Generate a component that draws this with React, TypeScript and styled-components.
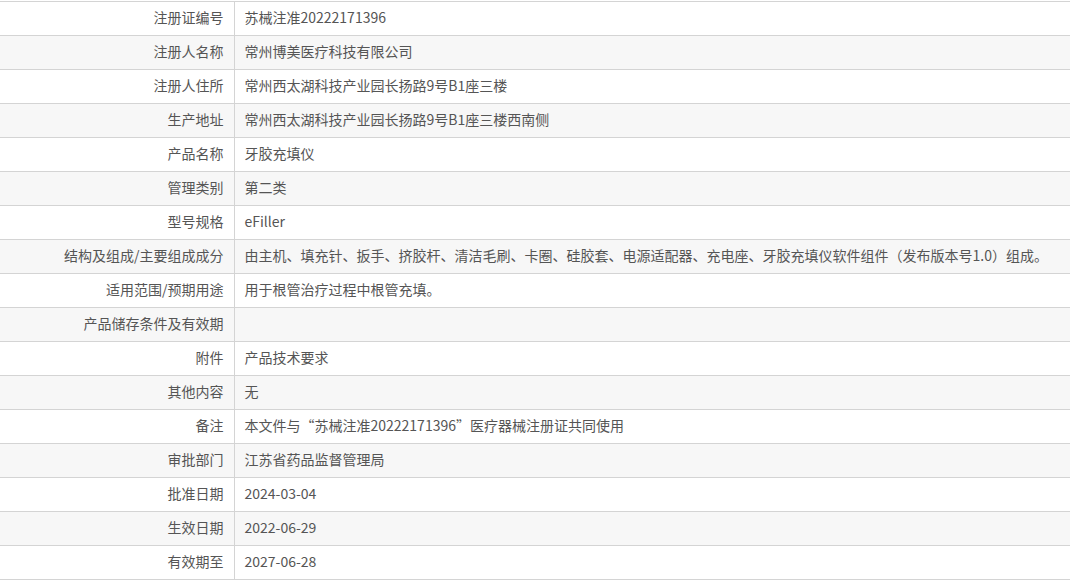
import React from "react";
import styled, { createGlobalStyle } from "styled-components";

const Global = createGlobalStyle`
  html, body { margin: 0; padding: 0; background: #fff; }
  body { font-family: "Microsoft YaHei", "Noto Sans CJK SC", "Noto Sans", sans-serif; }
`;

const Page = styled.div`
  padding-top: 1px;
`;

const Table = styled.table`
  width: 100%;
  border-collapse: collapse;
  table-layout: fixed;
  font-size: 14px;
  color: #555;
`;

const Row = styled.tr<{ $alt: boolean }>`
  background: ${(p) => (p.$alt ? "#f7f7f7" : "#fff")};
  border-top: 1px solid #d4d4d4;
  border-bottom: 1px solid #d4d4d4;
`;

const LabelCol = styled.col`
  width: 234px;
`;

const Label = styled.th`
  height: 31px;
  padding: 0 10px 2px 0;
  text-align: right;
  font-weight: normal;
  border-right: 1px solid #d4d4d4;
  white-space: nowrap;
  line-height: 31px;
`;

const Value = styled.td`
  height: 31px;
  padding: 0 0 2px 10px;
  text-align: left;
  white-space: nowrap;
  line-height: 31px;
`;

const rows: [string, string][] = [
  ["注册证编号", "苏械注准20222171396"],
  ["注册人名称", "常州博美医疗科技有限公司"],
  ["注册人住所", "常州西太湖科技产业园长扬路9号B1座三楼"],
  ["生产地址", "常州西太湖科技产业园长扬路9号B1座三楼西南侧"],
  ["产品名称", "牙胶充填仪"],
  ["管理类别", "第二类"],
  ["型号规格", "eFiller"],
  [
    "结构及组成/主要组成成分",
    "由主机、填充针、扳手、挤胶杆、清洁毛刷、卡圈、硅胶套、电源适配器、充电座、牙胶充填仪软件组件（发布版本号1.0）组成。",
  ],
  ["适用范围/预期用途", "用于根管治疗过程中根管充填。"],
  ["产品储存条件及有效期", ""],
  ["附件", "产品技术要求"],
  ["其他内容", "无"],
  ["备注", "本文件与“苏械注准20222171396”医疗器械注册证共同使用"],
  ["审批部门", "江苏省药品监督管理局"],
  ["批准日期", "2024-03-04"],
  ["生效日期", "2022-06-29"],
  ["有效期至", "2027-06-28"],
];

export default function App() {
  return (
    <>
      <Global />
      <Page>
        <Table>
          <colgroup>
            <LabelCol />
            <col />
          </colgroup>
          <tbody>
            {rows.map(([k, v], i) => (
              <Row key={k} $alt={i % 2 === 1}>
                <Label>{k}</Label>
                <Value>{v}</Value>
              </Row>
            ))}
          </tbody>
        </Table>
      </Page>
    </>
  );
}
